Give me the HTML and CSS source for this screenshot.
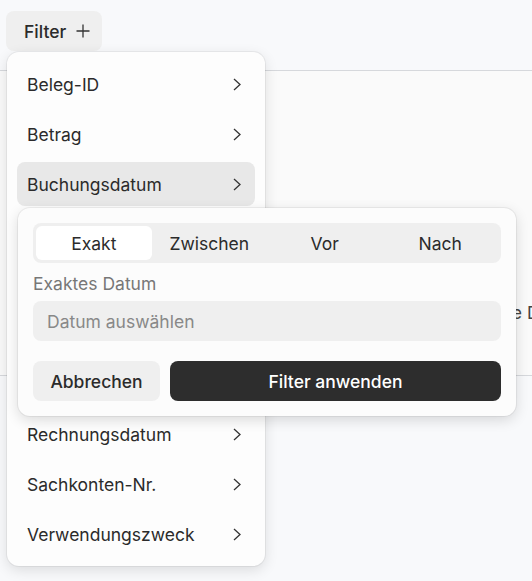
FILE: index.html
```html
<!DOCTYPE html>
<html lang="de">
  <head>
    <meta charset="UTF-8" />
    <meta name="viewport" content="width=device-width, initial-scale=1.0" />
    <title>Belege</title>
    <link rel="stylesheet" href="styles.css">
  </head>
  <body>
    <div class="toolbar">
      <button class="filter-btn">
        Filter
        <svg width="14" height="14" viewBox="0 0 14 14" fill="none" stroke="#333" stroke-width="1.3">
          <path d="M7 0.5v13M0.5 7h13" />
        </svg>
      </button>
    </div>
    <div class="table-area">
      <p class="empty">Keine Daten vorhanden</p>
    </div>

    <!-- Filter-Menü -->
    <div class="menu">
      <div class="menu-item">Beleg-ID <svg class="chev" viewBox="0 0 8 13"><path d="M1 1l6 5.5-6 5.5" /></svg></div>
      <div class="menu-item">Betrag <svg class="chev" viewBox="0 0 8 13"><path d="M1 1l6 5.5-6 5.5" /></svg></div>
      <div class="menu-item active">Buchungsdatum <svg class="chev" viewBox="0 0 8 13"><path d="M1 1l6 5.5-6 5.5" /></svg></div>
      <div class="menu-item">Dokumenttyp <svg class="chev" viewBox="0 0 8 13"><path d="M1 1l6 5.5-6 5.5" /></svg></div>
      <div class="menu-item">Kostenstelle <svg class="chev" viewBox="0 0 8 13"><path d="M1 1l6 5.5-6 5.5" /></svg></div>
      <div class="menu-item">Lieferant <svg class="chev" viewBox="0 0 8 13"><path d="M1 1l6 5.5-6 5.5" /></svg></div>
      <div class="menu-item">Rechnungsnummer <svg class="chev" viewBox="0 0 8 13"><path d="M1 1l6 5.5-6 5.5" /></svg></div>
      <div class="menu-item">Rechnungsdatum <svg class="chev" viewBox="0 0 8 13"><path d="M1 1l6 5.5-6 5.5" /></svg></div>
      <div class="menu-item">Sachkonten-Nr. <svg class="chev" viewBox="0 0 8 13"><path d="M1 1l6 5.5-6 5.5" /></svg></div>
      <div class="menu-item">Verwendungszweck <svg class="chev" viewBox="0 0 8 13"><path d="M1 1l6 5.5-6 5.5" /></svg></div>
    </div>

    <!-- Datum-Filter -->
    <div class="popover">
      <div class="tabs">
        <div class="tab selected">Exakt</div>
        <div class="tab">Zwischen</div>
        <div class="tab">Vor</div>
        <div class="tab">Nach</div>
      </div>
      <label class="label">Exaktes Datum</label>
      <div class="input">Datum auswählen</div>
      <div class="actions">
        <button class="btn btn-light">Abbrechen</button>
        <button class="btn btn-dark">Filter anwenden</button>
      </div>
    </div>
  </body>
</html>
```

FILE: styles.css
```css
body {
  font-family: Inter, "Noto Sans", sans-serif;
  font-size: 17.5px;
  background-color: #f8f9fb;
  color: #2b2b2b;
  margin: 0;
  padding: 0;
  overflow: hidden;
}
.toolbar {
  height: 71px;
  padding: 11px 6px 0;
  box-sizing: border-box;
  border-bottom: 1px solid #d6d8dc;
}
.filter-btn {
  display: flex;
  align-items: center;
  gap: 10px;
  height: 40px;
  padding: 0 12px 0 18px;
  font-family: inherit;
  font-size: 17.5px;
  font-weight: 500;
  color: #2b2b2b;
  background: #efefef;
  border: none;
  border-radius: 8px;
}
.table-area {
  height: 304px;
  background: #fafafa;
  border-bottom: 1px solid #d6d8dc;
  overflow: hidden;
}
.empty {
  margin: 231px 0 0 476px;
  color: #444;
  white-space: nowrap;
}
.menu {
  position: absolute;
  top: 52px;
  left: 7px;
  width: 258px;
  box-sizing: border-box;
  padding: 10px;
  display: flex;
  flex-direction: column;
  gap: 6px;
  background: #fdfdfd;
  border-radius: 12px;
  box-shadow: 0 0 0 1px rgba(0, 0, 0, 0.05), 0 4px 14px rgba(0, 0, 0, 0.12);
}
.menu-item {
  height: 44px;
  padding: 0 14px 0 10px;
  display: flex;
  align-items: center;
  justify-content: space-between;
  border-radius: 8px;
}
.menu-item.active {
  background: #e8e8e8;
}
.chev {
  width: 8px;
  height: 13px;
  fill: none;
  stroke: #333;
  stroke-width: 1.3;
}
.popover {
  position: absolute;
  top: 208px;
  left: 18px;
  width: 498px;
  box-sizing: border-box;
  padding: 15px;
  background: #fcfcfc;
  border-radius: 12px;
  box-shadow: 0 0 0 1px rgba(0, 0, 0, 0.05), 0 4px 14px rgba(0, 0, 0, 0.14);
}
.tabs {
  display: grid;
  grid-template-columns: repeat(4, 1fr);
  padding: 3px;
  height: 40px;
  box-sizing: border-box;
  background: #efefef;
  border-radius: 8px;
}
.tab {
  display: flex;
  align-items: center;
  justify-content: center;
  border-radius: 6px;
}
.tab.selected {
  background: #fff;
}
.label {
  display: block;
  margin: 10px 0 6px;
  line-height: 22px;
  color: #777;
}
.input {
  height: 40px;
  display: flex;
  align-items: center;
  padding: 0 14px;
  color: #888;
  background: #efefef;
  border-radius: 8px;
}
.actions {
  display: flex;
  gap: 10px;
  margin-top: 20px;
}
.btn {
  height: 40px;
  font-family: inherit;
  font-size: 17.5px;
  font-weight: 500;
  border: none;
  border-radius: 8px;
}
.btn-light {
  width: 127px;
  color: #2b2b2b;
  background: #efefef;
}
.btn-dark {
  flex: 1;
  color: #fff;
  background: #2d2d2d;
}
```
